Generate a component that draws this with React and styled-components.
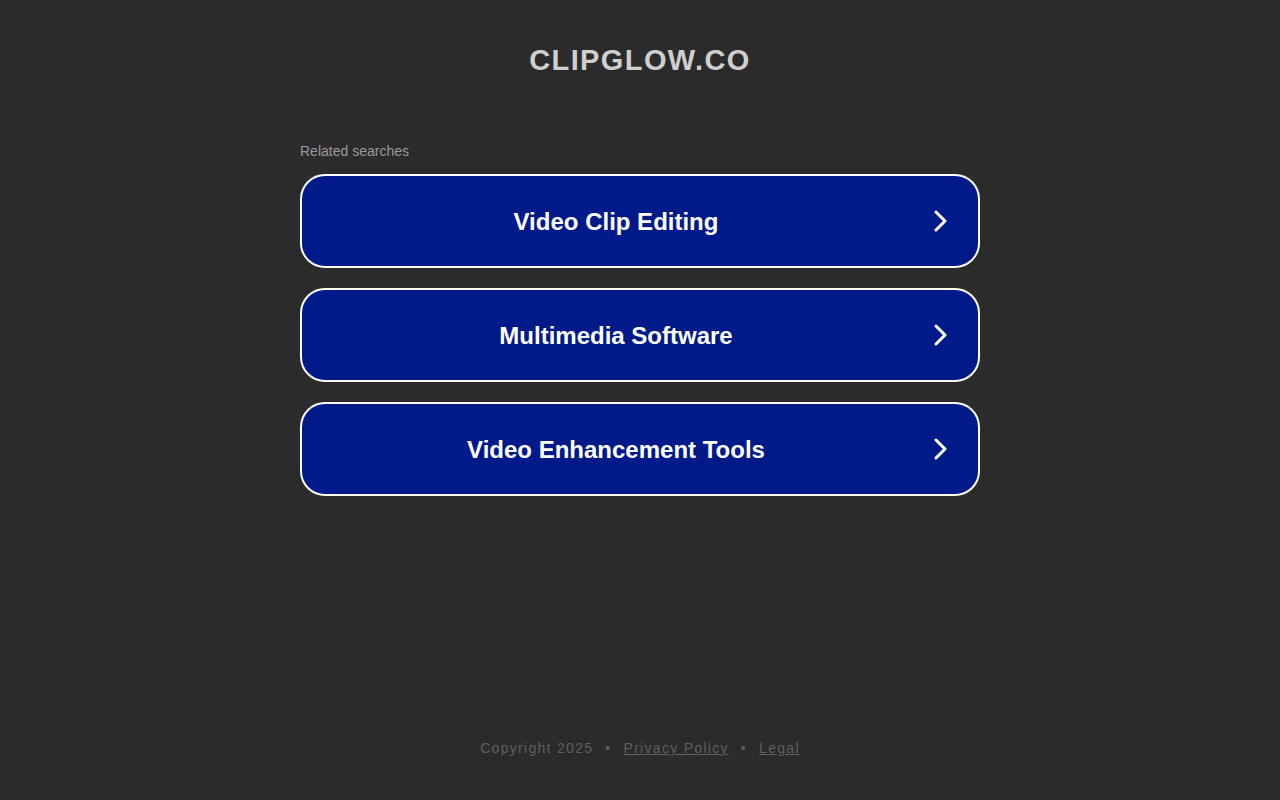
import React from 'react'
import styled, { createGlobalStyle } from 'styled-components'

const GlobalStyle = createGlobalStyle`
  html, body {
    margin: 0;
    padding: 0;
    background-color: #2b2b2b;
    font-family: Arial, "Liberation Sans", sans-serif;
  }
`;

const Page = styled.div`
  min-height: 100vh;
  display: flex;
  flex-direction: column;
  align-items: center;
`;

const Title = styled.h1`
  margin: 44px 0 0;
  font-size: 29px;
  line-height: 32px;
  font-weight: 700;
  letter-spacing: 1.4px;
  color: #cfcfcf;
  text-align: center;
`;

const Content = styled.div`
  width: 680px;
  margin-top: 67px;
`;

const Label = styled.div`
  font-size: 14px;
  line-height: 16px;
  color: #9a9a9a;
  margin-bottom: 15px;
`;

const List = styled.div`
  display: flex;
  flex-direction: column;
  gap: 20px;
`;

const Search = styled.a`
  display: flex;
  align-items: center;
  gap: 28px;
  height: 94px;
  box-sizing: border-box;
  padding: 0 26px 0 30px;
  border: 2px solid #fff;
  border-radius: 25px;
  background-color: #011a8a;
  color: #fff;
  text-decoration: none;
  cursor: pointer;
`;

const SearchText = styled.span`
  flex: 1;
  text-align: center;
  font-size: 24px;
  font-weight: 700;
  padding-top: 2px;
`;

const Chevron = styled.svg`
  width: 24px;
  height: 22px;
  flex-shrink: 0;
`;

const Footer = styled.footer`
  margin-top: auto;
  padding-bottom: 44px;
  font-size: 14px;
  line-height: 16px;
  letter-spacing: 1.3px;
  color: #5f5f5f;
  display: flex;
  align-items: center;
`;

const Dot = styled.span`
  margin: 0 12px;
`;

const FooterLink = styled.a`
  color: #5f5f5f;
  text-decoration: underline;
`;

const searches = ['Video Clip Editing', 'Multimedia Software', 'Video Enhancement Tools'];

const App = () => {
  return (
    <>
      <GlobalStyle />
      <Page>
        <Title>CLIPGLOW.CO</Title>
        <Content>
          <Label>Related searches</Label>
          <List>
            {searches.map((s) => (
              <Search key={s}>
                <SearchText>{s}</SearchText>
                <Chevron viewBox="0 0 24 22">
                  <path d="M8 2 L17 11 L8 20" fill="none" stroke="#fff" strokeWidth="3" strokeLinecap="round" strokeLinejoin="round" />
                </Chevron>
              </Search>
            ))}
          </List>
        </Content>
        <Footer>
          Copyright 2025
          <Dot>•</Dot>
          <FooterLink>Privacy Policy</FooterLink>
          <Dot>•</Dot>
          <FooterLink>Legal</FooterLink>
        </Footer>
      </Page>
    </>
  )
}

export default App
